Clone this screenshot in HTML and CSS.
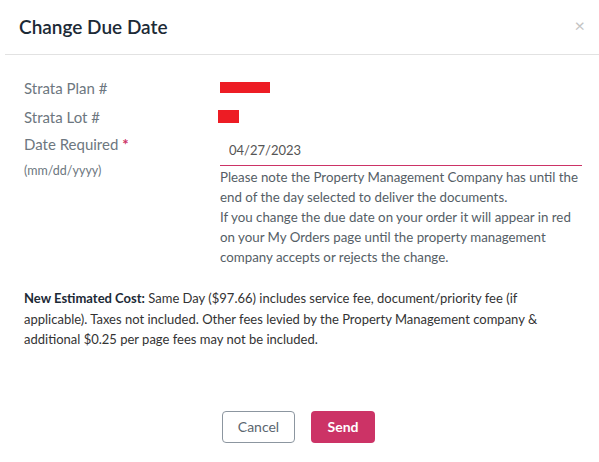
FILE: index.html
```html
<!DOCTYPE html>
<html lang="en">
<head>
    <meta charset="UTF-8">
    <meta name="viewport" content="width=device-width">
    <title>Change Due Date</title>
    <link rel="stylesheet" href="styles.css">
</head>
<body>
    <div class="modal">
        <header class="modal-header">
            <h2>Change Due Date</h2>
            <span class="close">&times;</span>
        </header>

        <main class="modal-body">
            <div class="row">
                <div class="label">Strata Plan #</div>
                <div class="value"><span class="redact redact-plan"></span></div>
            </div>
            <div class="row">
                <div class="label">Strata Lot #</div>
                <div class="value"><span class="redact redact-lot"></span></div>
            </div>
            <div class="row row-date">
                <div class="label">
                    Date Required <span class="req">*</span>
                    <div class="hint">(mm/dd/yyyy)</div>
                </div>
                <div class="value">
                    <input type="text" class="date-input" value="04/27/2023">
                    <p class="note">Please note the Property Management Company has until the end of the day selected to deliver the documents.<br>
                    If you change the due date on your order it will appear in red on your My Orders page until the property management company accepts or rejects the change.</p>
                </div>
            </div>

            <p class="cost"><b>New Estimated Cost:</b> Same Day ($97.66) includes service fee, document/priority fee (if applicable). Taxes not included. Other fees levied by the Property Management company &amp; additional $0.25 per page fees may not be included.</p>
        </main>

        <footer class="modal-footer">
            <button class="btn btn-cancel">Cancel</button>
            <button class="btn btn-send">Send</button>
        </footer>
    </div>
</body>
</html>
```

FILE: styles.css
```css
body {
    margin: 0;
    background: #fff;
    font-family: Lato, "Open Sans", sans-serif;
    color: #333;
}

.modal {
    width: 599px;
}

.modal-header {
    display: flex;
    justify-content: space-between;
    align-items: flex-start;
    margin-left: 5px;
    padding: 15px 14px 0 14px;
    height: 39px;
    border-bottom: 1px solid #e2e2e2;
}

.modal-header h2 {
    margin: 0;
    font-size: 19px;
    font-weight: 600;
    color: #1c2a36;
}

.close {
    font-size: 18px;
    line-height: 16px;
    color: #c4c4c4;
    margin-top: 2px;
}

.modal-body {
    padding: 18px 17px 0 24px;
}

.row {
    display: grid;
    grid-template-columns: 196px 1fr;
    min-height: 29px;
    align-items: center;
}

.row-date {
    align-items: start;
}

.row-date .label {
    padding-top: 4px;
}

.label {
    font-size: 15px;
    color: #6d7780;
}

.req {
    color: #cc3366;
    font-weight: bold;
}

.hint {
    font-size: 12.5px;
    margin-top: 10px;
}

.redact {
    display: block;
    background: #ed1c24;
    height: 11px;
}

.redact-plan {
    width: 50px;
}

.redact-lot {
    width: 21px;
    height: 13px;
    margin-left: -2px;
}

.date-input {
    display: block;
    width: 100%;
    box-sizing: border-box;
    border: none;
    border-bottom: 1px solid #cc3366;
    padding: 11px 9px 7px;
    font-family: inherit;
    font-size: 13px;
    color: #555;
    outline: none;
}

.note {
    margin: 1px 0 0;
    font-size: 13.3px;
    line-height: 20px;
    color: #555e66;
}

.cost {
    margin: 21px 0 0;
    font-size: 13px;
    line-height: 20.5px;
    color: #333;
}

.cost b {
    color: #1c2a36;
}

.modal-footer {
    display: flex;
    justify-content: center;
    gap: 16px;
    margin-top: 61px;
    padding-right: 2px;
}

.btn {
    font-family: inherit;
    font-size: 14px;
    height: 32px;
    border-radius: 4px;
    cursor: pointer;
}

.btn-cancel {
    width: 73px;
    background: #fff;
    border: 1px solid #8c96a0;
    color: #5b6670;
}

.btn-send {
    width: 64px;
    background: #cc3366;
    border: none;
    color: #fff;
    font-weight: bold;
}
```
